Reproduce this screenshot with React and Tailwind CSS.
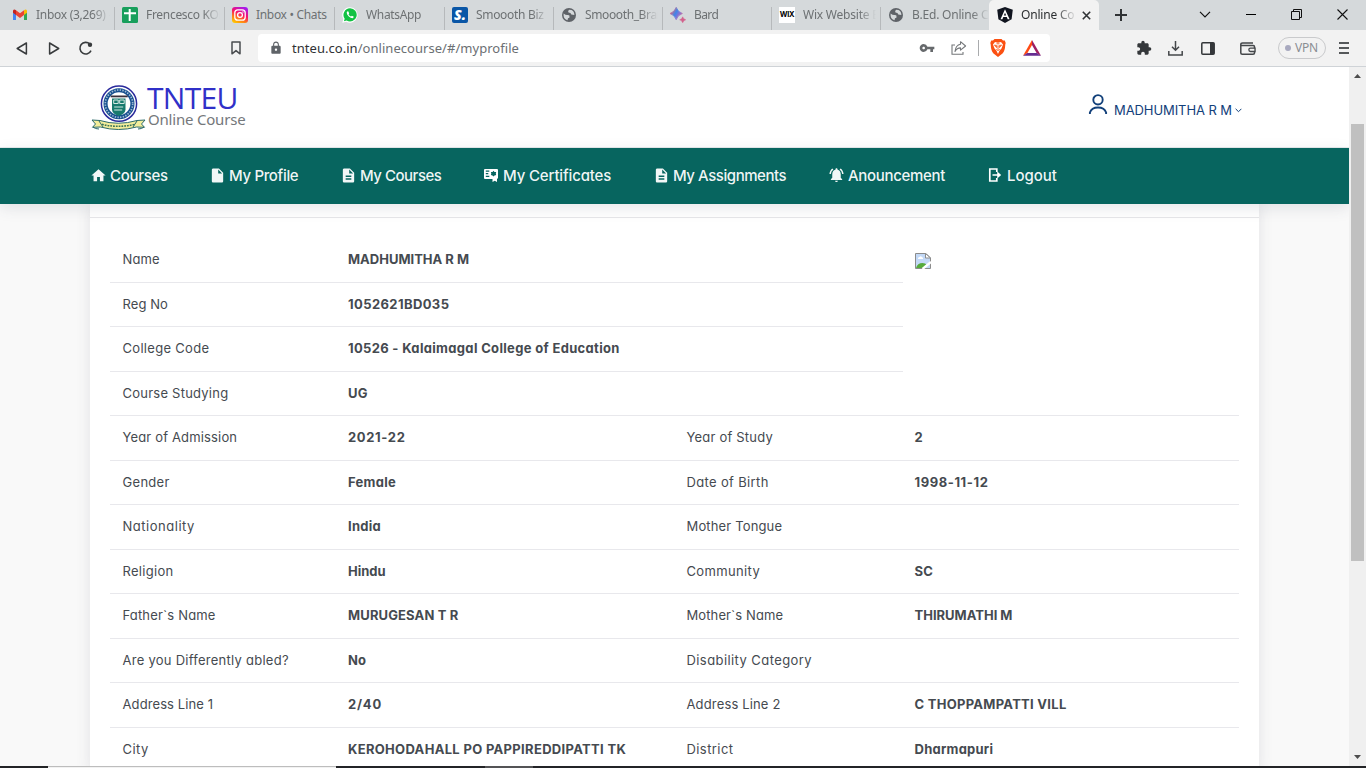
import React from "react";
import {
  MdHome,
  MdInsertDriveFile,
  MdDescription,
  MdNotificationsActive,
  MdLock,
  MdVpnKey,
  MdExtension,
} from "react-icons/md";

function GlobeIcon() {
  return (
    <svg width="16" height="16" viewBox="0 0 16 16">
      <circle cx="8" cy="8" r="7" fill="#5f6368" />
      <path d="M2.6 6.5 Q5 8.5 7 8 Q9 8 8.5 9.8 Q9 11 7 11.2 L6.5 13.2 Q2.8 12.2 2.6 8.500Z" fill="#d5d9db" />
      <path d="M8 2.700 Q6.500 4.500 7.500 5.500 Q10 5.500 10.300 7.500 L13.400 8 Q13.200 4 10.500 3Z" fill="#d5d9db" />
    </svg>
  );
}

function GmailIcon() {
  return (
    <svg width="16" height="16" viewBox="0 0 16 16">
      <path d="M1 4v9h3V7z" fill="#4285f4" />
      <path d="M12 7v6h3V4z" fill="#34a853" />
      <path d="M1 3.500 Q2 1.800 4 3.200 V8 L1 5.700z" fill="#c5221f" />
      <path d="M4 3.200 L8 6.300 12 3.200 V8 L8 11 4 8z" fill="#ea4335" />
      <path d="M12 3.200 Q14 1.800 15 3.500 V5.700 L12 8z" fill="#fbbc04" />
    </svg>
  );
}

function SheetIcon() {
  return (
    <svg width="16" height="16" viewBox="0 0 16 16">
      <rect width="16" height="16" rx="1.500" fill="#189f5c" />
      <path d="M2 5.200h12v2H2zM6.700 2h2v12h-2z" fill="#fff" />
    </svg>
  );
}

function InstagramIcon() {
  return (
    <svg width="16" height="16" viewBox="0 0 16 16">
      <defs>
        <linearGradient id="ig" x1="0.200" y1="1" x2="0.700" y2="0">
          <stop offset="0" stopColor="#ffc800" />
          <stop offset="0.300" stopColor="#ff7a1a" />
          <stop offset="0.600" stopColor="#f8106b" />
          <stop offset="1" stopColor="#a51bef" />
        </linearGradient>
      </defs>
      <rect width="16" height="16" rx="3" fill="url(#ig)" />
      <rect x="2.800" y="2.800" width="10.400" height="10.400" rx="3" fill="none" stroke="#fff" strokeWidth="1.300" />
      <circle cx="8" cy="8" r="2.400" fill="none" stroke="#fff" strokeWidth="1.300" />
      <circle cx="11" cy="5" r="0.700" fill="#fff" />
    </svg>
  );
}

function WhatsAppIcon() {
  return (
    <svg width="16" height="16" viewBox="0 0 16 16">
      <path d="M8 0.200a7.700 7.700 0 1 1-3.700 14.500L0.300 15.800 1.400 12A7.700 7.700 0 0 1 8 0.200z" fill="#fff" />
      <path d="M8 1.300a6.600 6.600 0 1 1-3.400 12.200L1.900 14.200 2.700 11.700A6.600 6.600 0 0 1 8 1.300z" fill="#12c243" />
      <path d="M5.600 4.300 4.700 5.300Q4.500 7.200 6.600 9.300 8.800 11.400 10.600 11.300L11.700 10.300 11.500 9.500 9.900 8.700 9 9.600Q7.400 9 6.500 7.200L7.200 6.400 6.400 4.400z" fill="#fff" />
    </svg>
  );
}

function SmooothIcon() {
  return (
    <div className="flex h-4 w-4 items-center justify-center rounded-[2px] bg-[#0a56a6] font-['Open_Sans',sans-serif] text-[14px] leading-none font-extrabold text-white italic">
      S.
    </div>
  );
}

function BardIcon() {
  return (
    <svg width="16" height="16" viewBox="0 0 16 16">
      <defs>
        <linearGradient id="bard" x1="0" y1="0.200" x2="1" y2="0.800">
          <stop offset="0.100" stopColor="#e2607c" />
          <stop offset="0.450" stopColor="#3f86e8" />
          <stop offset="0.650" stopColor="#7d74d8" />
          <stop offset="1" stopColor="#d9688f" />
        </linearGradient>
      </defs>
      <path d="M6.200 0.300Q7.600 4.900 12.400 6.500 7.600 8.100 6.200 12.700 4.800 8.100 0 6.500 4.800 4.900 6.200 0.300z" fill="url(#bard)" stroke="url(#bard)" strokeWidth="0.800" />
      <path d="M12.700 9.800Q13.400 12.100 15.800 12.800 13.400 13.500 12.700 15.800 12 13.500 9.600 12.800 12 12.100 12.700 9.800z" fill="#d4618c" stroke="#d4618c" strokeWidth="0.400" />
    </svg>
  );
}

function WixIcon() {
  return (
    <div className="flex h-4 w-4 items-center justify-center bg-white font-['Inter',sans-serif] text-[7.500px] leading-none font-bold tracking-[-0.300px] text-black">
      WIX
    </div>
  );
}

function AngularIcon() {
  return (
    <svg width="16" height="16" viewBox="0 0 16 16">
      <path d="M8 0 15.800 2.700 14.600 12.300 8 16 1.400 12.300 0.200 2.700z" fill="#10141f" />
      <path d="M8 2.200 3.500 12.200h1.900l.9-2.200h3.500l.9 2.200h1.900zM8 5.800l1.200 2.800H6.800z" fill="#fff" />
    </svg>
  );
}

const tabs = [
  { label: "Inbox (3,269) -", icon: <GmailIcon />, width: "w-[115px] pl-3", text: "tracking-[-0.280px]" },
  { label: "Frencesco KOL", icon: <SheetIcon />, width: "w-[110px] pl-[7px]", text: "tracking-[-0.300px]" },
  { label: "Inbox • Chats", icon: <InstagramIcon />, width: "w-[110px] pl-[7px]", text: "tracking-[-0.320px]", whole: true },
  { label: "WhatsApp", icon: <WhatsAppIcon />, width: "w-[110px] pl-[7px]", text: "tracking-[-0.350px]" },
  { label: "Smoooth Biz |", icon: <SmooothIcon />, width: "w-[109px] pl-[7px]", text: "tracking-[-0.320px]" },
  { label: "Smoooth_Bran", icon: <GlobeIcon />, width: "w-[109px] pl-[7px]", text: "tracking-[-0.380px]" },
  { label: "Bard", icon: <BardIcon />, width: "w-[109px] pl-[7px]", text: "tracking-[-0.600px]" },
  { label: "Wix Website E", icon: <WixIcon />, width: "w-[109px] pl-[7px]", text: "tracking-[-0.220px]" },
  { label: "B.Ed. Online C", icon: <GlobeIcon />, width: "w-[108px] pl-[7px]", text: "tracking-[-0.200px]", last: true },
];

function TabStrip() {
  return (
    <div className="flex h-[30px] bg-[#d5d9db] text-[12px] text-[#6d7173]">
      {tabs.map((tab) => (
        <div key={tab.label} className={`flex shrink-0 items-center gap-2 ${tab.width}`}>
          <div className="w-4 shrink-0">{tab.icon}</div>
          <div
            className={`min-w-0 flex-1 whitespace-nowrap ${tab.text} ${
              tab.whole ? "" : "mask-[linear-gradient(to_right,black_calc(100%-17px),transparent_100%)]"
            }`}
          >
            {tab.label}
          </div>
          {tab.last ? null : <div className="mt-[7px] -ml-1 h-[23px] w-px shrink-0 bg-[#b6b9bb]" />}
        </div>
      ))}
      <div className="flex w-[110px] shrink-0 items-center rounded-t-[5px] bg-[#f2f2f2] pl-2 text-[#2c2f31]">
        <AngularIcon />
        <div className="ml-2 w-[54px] mask-[linear-gradient(to_right,black_34px,transparent_56px)] tracking-[-0.200px] whitespace-nowrap">
          Online Co
        </div>
        <svg className="ml-[7px]" width="9" height="9" viewBox="0 0 9 9">
          <path d="M.8.8l7.400 7.400M8.200.8L.8 8.200" stroke="#303335" strokeWidth="1.600" />
        </svg>
      </div>
      <svg className="mt-[9px] ml-4" width="12" height="12" viewBox="0 0 12 12">
        <path d="M6 0v12M0 6h12" stroke="#303335" strokeWidth="2" />
      </svg>
      <div className="ml-[72px] flex items-center pb-[2px]">
        <svg width="12" height="7" viewBox="0 0 12 7">
          <path d="M1 .8l5 5 5-5" fill="none" stroke="#111" strokeWidth="1.200" />
        </svg>
        <div className="ml-[35px] h-px w-[10px] bg-black" />
        <svg className="ml-[35px]" width="11" height="11" viewBox="0 0 11 11">
          <path d="M.5 2.500h8v8h-8zM2.500 2.500v-2h8v8h-2" fill="none" stroke="#111" />
        </svg>
        <svg className="ml-[35px]" width="11" height="11" viewBox="0 0 11 11">
          <path d="M.5.5l10 10M10.500.5l-10 10" stroke="#111" strokeWidth="1.100" />
        </svg>
      </div>
    </div>
  );
}

function AddressBar() {
  return (
    <div className="flex h-[37px] items-center border-b border-[#cfd3d7] bg-[#f2f2f2]">
      <svg className="ml-4" width="12" height="13" viewBox="0 0 12 13">
        <path d="M10.400 1v11L1.200 6.500z" fill="none" stroke="#383b3d" strokeWidth="1.500" strokeLinejoin="round" />
      </svg>
      <svg className="ml-5" width="12" height="13" viewBox="0 0 12 13">
        <path d="M1.600 1v11L10.700 6.500z" fill="none" stroke="#383b3d" strokeWidth="1.500" strokeLinejoin="round" />
      </svg>
      <svg className="ml-[18px]" width="16" height="15" viewBox="0 0 16 15">
        <path d="M11.800 3A5.800 5.800 0 1 0 13 9.600" fill="none" stroke="#383b3d" strokeWidth="1.600" />
        <circle cx="12" cy="3.800" r="2.200" fill="#383b3d" />
      </svg>
      <svg className="ml-[137px]" width="10" height="14" viewBox="0 0 10 14">
        <path d="M1 1h8v11.800L5 9.600 1 12.800z" fill="none" stroke="#4a4d50" strokeWidth="1.500" strokeLinejoin="round" />
      </svg>
      <div className="ml-[17px] flex h-7 w-[792px] items-center rounded bg-white pl-[11px]">
        <MdLock className="h-[14px] w-[14px] text-[#5f6368]" />
        <div className="ml-[9px] w-[627px] pt-[2px] font-['Noto_Sans',sans-serif] text-[13px] tracking-[0.040px] whitespace-nowrap text-[#6b6f73]">
          <span className="text-[#2f3235]">tnteu.co.in</span>/onlinecourse/#/myprofile
        </div>
        <MdVpnKey className="h-4 w-4 text-[#66696c]" />
        <svg className="ml-4" width="16" height="16" viewBox="0 0 16 16">
          <path d="M4 5H1v9.300h11V12" fill="none" stroke="#74777a" strokeWidth="1.100" />
          <path d="M9.500 1.700 14.600 6 9.500 10.200V7.900Q6 7.900 4 11.500 4.600 5 9.500 4.200z" fill="none" stroke="#74777a" strokeWidth="1.100" strokeLinejoin="round" />
        </svg>
        <div className="ml-[11px] h-4 w-px bg-[#a9abad]" />
        <svg className="ml-[11px]" width="16" height="18" viewBox="0 0 16 18">
          <path d="M4.500 0h7L13 1.600l1.800-.1L15.700 4l-.4 1.500Q15 12 12.500 14.500L8 18 3.500 14.500Q1 12 .7 5.500L.3 4l.9-2.500 1.800.1z" fill="#fb5012" />
          <path d="M5 3l3 .7L11 3l2 2.600-1.500 4L9.600 11.500 8 15 6.400 11.500 4.500 9.600 3 5.600z" fill="#fff" />
          <path d="M4.500 6l2.300.7-.3 1.800zM11.500 6l-2.300.7.3 1.800zM8 6.500v4M6.300 10.300L8 11.500l1.700-1.200M6.500 4.800h3" fill="none" stroke="#fb5012" strokeWidth="0.900" />
        </svg>
        <svg className="ml-[17px]" width="18" height="16" viewBox="0 0 18 16">
          <path d="M9 0L0 15.800 4.300 13.200 9 5z" fill="#ff4a13" />
          <path d="M9 0l9 15.800-4.300-2.600L9 5z" fill="#9e1f63" />
          <path d="M0 15.800h18l-4.300-2.900H4.300z" fill="#662d91" />
        </svg>
      </div>
      <MdExtension className="ml-[86px] h-4 w-4 text-[#34373a]" />
      <svg className="ml-[16px]" width="15" height="15" viewBox="0 0 15 15">
        <path d="M7.500 0v9M4 5.800l3.500 3.500L11 5.800M.8 10v4h13.400v-4" fill="none" stroke="#44474a" strokeWidth="1.500" />
      </svg>
      <svg className="ml-[18px]" width="14" height="13" viewBox="0 0 14 13">
        <rect x="0.800" y="0.800" width="12.400" height="11.400" rx="1" fill="none" stroke="#34373a" strokeWidth="1.500" />
        <path d="M9 1h4v11H9z" fill="#34373a" />
      </svg>
      <svg className="ml-[25px]" width="16" height="13" viewBox="0 0 16 13">
        <path d="M13 1H2.500Q.8 1 .8 2.500V11q0 1.200 1.500 1.200H13q1.500 0 1.500-1.200V4.800q0-1.200-1.200-1.200H1" fill="none" stroke="#44474a" strokeWidth="1.500" />
        <path d="M15 6.200h-4.500a1.500 1.500 0 0 0 0 3.300H15z" fill="#f2f2f2" stroke="#44474a" strokeWidth="1.300" />
      </svg>
      <div className="ml-[22px] flex h-[22px] w-12 items-center gap-1 rounded-full border border-[#c9cacc] pl-1.5 text-[12px] tracking-[-0.200px] text-[#8a8d92]">
        <div className="h-1.5 w-1.5 rounded-full bg-[#a8a9bf]" />
        VPN
      </div>
      <div className="ml-[13px] flex flex-col gap-[3px]">
        <div className="h-[2px] w-[10px] bg-[#55585a]" />
        <div className="h-[2px] w-[10px] bg-[#55585a]" />
        <div className="h-[2px] w-[10px] bg-[#55585a]" />
      </div>
    </div>
  );
}

function Emblem() {
  return (
    <svg className="mt-px -ml-px" width="57" height="46" viewBox="0 0 57 46">
      <circle cx="30" cy="18.700" r="17.600" fill="#fff" stroke="#2a2a9c" strokeWidth="1.500" />
      <circle cx="30" cy="18.700" r="15.500" fill="#17508f" />
      <circle cx="30" cy="18.700" r="13.700" fill="none" stroke="#9db9d3" strokeWidth="1.700" strokeDasharray="1.400 1.300" />
      <circle cx="30" cy="18.700" r="11.400" fill="#fff" />
      <path d="M21.700 10.500h17v1.800h-17z" fill="#38303c" />
      <path d="M23 13.500h13.500v11q0 4-6.800 6.500-6.700-2.500-6.700-6.500z" fill="#187a6e" />
      <path d="M24.700 15h4.500v3.500h-4.500zM30.700 15h4.500v3.500h-4.500zM25.200 22h9M25.200 25h8" fill="none" stroke="#d3e8e2" strokeWidth="1" />
      <path d="M3 35l8 .5q18 5.500 37 0l8-.5-3.500 4 3 3.300-8-.3q-18 5-36 0l-8 .3 3-3.300z" fill="#f3ed9a" stroke="#2b6a69" strokeWidth="1" />
      <path d="M13 39.300q16 4 33 0" fill="none" stroke="#3b7459" strokeWidth="1.600" strokeDasharray="1.800 1" />
      <path d="M10 44q-4 0-6-2M49 44q4 0 6-2M10 36l4 6M48 36l-4 6" fill="none" stroke="#2b6a69" />
    </svg>
  );
}

function SiteHeader() {
  return (
    <header className="flex h-[81px] items-start justify-between border-b border-[#e6eaec] bg-white pr-[107px] pl-[90px]">
      <div className="flex pt-[17px]">
        <Emblem />
        <div className="pt-px pl-[1px]">
          <div className="h-[27px] font-['Open_Sans',sans-serif] text-[30px] leading-[25px] tracking-[-0.700px] text-[#3030c8]">
            TNTEU
          </div>
          <div className="pl-[1px] font-['Noto_Sans',sans-serif] text-[15px] leading-[15px] tracking-[-0.200px] text-[#75787b]">
            Online Course
          </div>
        </div>
      </div>
      <div className="flex pt-[27px] text-[#12407a]">
        <svg width="20" height="21" viewBox="0 0 20 21">
          <circle cx="10" cy="5.800" r="4.700" fill="none" stroke="#12407a" strokeWidth="1.900" />
          <path d="M1.900 20v-1.500Q3.500 13.500 10 13.500t8.100 5V20" fill="none" stroke="#12407a" strokeWidth="1.900" />
        </svg>
        <div className="mt-[6px] ml-1.5 font-['Inter',sans-serif] text-[13px] leading-5 tracking-[-0.080px]">MADHUMITHA R M</div>
        <svg className="mt-[14px] ml-[3px]" width="7" height="5" viewBox="0 0 7 5">
          <path d="M.6.800l2.900 2.900L6.400.800" fill="none" stroke="#12407a" />
        </svg>
      </div>
    </header>
  );
}

function CertificateIcon() {
  return (
    <svg width="14" height="14" viewBox="0 0 14 14">
      <path d="M1 1h12q1 0 1 1v8q0 .8-1 .8V14l-2.200-1.300L8.500 14v-3H1q-1 0-1-1V2q0-1 1-1z" fill="#fff" />
      <path d="M1.800 3.200h3.500M1.800 5.700h2.500M1.800 8.300h3.500" stroke="#07655f" strokeWidth="1.300" />
      <path d="M9.500 2.700l1 1.200 1.700.2-.4 1.500.4 1.500-1.700.3-1 1.200-1-1.200-1.600-.3.400-1.500-.4-1.500 1.600-.2z" fill="#07655f" />
    </svg>
  );
}

function LogoutIcon() {
  return (
    <svg width="14" height="14" viewBox="0 0 14 14">
      <path d="M8.800 4V1H1.800v12h7v-3M4.500 7h7" fill="none" stroke="#fff" strokeWidth="1.700" />
      <path d="M9.200 3.600L13.200 7l-4 3.400z" fill="#fff" />
    </svg>
  );
}

const navItems = [
  { label: "Courses", icon: <MdHome size={17} />, place: "w-[119px]", text: "tracking-[-0.300px]" },
  { label: "My Profile", icon: <MdInsertDriveFile size={17} />, place: "w-[131px]", text: "tracking-[-0.340px]" },
  { label: "My Courses", icon: <MdDescription size={17} />, place: "w-[143px]", text: "tracking-[-0.480px]" },
  { label: "My Certificates", icon: <CertificateIcon />, place: "w-[170px]", text: "tracking-[-0.150px]" },
  { label: "My Assignments", icon: <MdDescription size={17} />, place: "w-[175px]", text: "tracking-[-0.450px]" },
  { label: "Anouncement", icon: <MdNotificationsActive size={18} />, place: "w-[159px]", text: "tracking-[-0.320px]" },
  { label: "Logout", icon: <LogoutIcon />, place: "w-[100px]", text: "tracking-[-0.050px]" },
];

function NavBar() {
  return (
    <nav className="relative z-10 flex h-14 items-center bg-[#07655f] pl-[89.500px] font-['Inter',sans-serif] text-[15px] font-medium [font-feature-settings:'cv11'] text-white/95 shadow-[0_4px_14px_rgba(60,70,90,0.130)]">
      {navItems.map((item) => (
        <div key={item.label} className={`flex shrink-0 items-center gap-[3.500px] ${item.place}`}>
          <div className="flex w-[17px] shrink-0 justify-center pb-[2px]">{item.icon}</div>
          <div className={`whitespace-nowrap ${item.text}`}>{item.label}</div>
        </div>
      ))}
    </nav>
  );
}

function BrokenImage() {
  return (
    <svg width="16" height="16" viewBox="0 0 16 16">
      <path d="M.5.500h10.500l4.500 4.500v10.500H.5z" fill="#c3d9f7" stroke="#8c8c8c" />
      <path d="M10.500.500V5H15.500z" fill="#fff" stroke="#8c8c8c" />
      <path d="M3 5.500q0-1.500 1.500-1.500 1.500-1.500 2.500.300 1.500 0 1 1.700H3z" fill="#fff" />
      <path d="M1 15q1.500-5 6.500-5 3 0 4 1.500L8 15z" fill="#57ab3c" />
      <path d="M7.500 16l8.500-7" stroke="#fff" strokeWidth="2.300" />
    </svg>
  );
}

const tight = "tracking-[0px]";
const snug = "tracking-[0.150px]";
const normal = "tracking-[0.300px]";
const wide = "tracking-[0.420px]";
const wider = "tracking-[0.800px]";

const upperRows = [
  { label: ["Name", snug], value: ["MADHUMITHA R M", tight] },
  { label: ["Reg No", "tracking-[0.080px]"], value: ["1052621BD035", "tracking-[0.400px]"] },
  { label: ["College Code", normal], value: ["10526 - Kalaimagal College of Education", "tracking-[0.330px]"] },
  { label: ["Course Studying", "tracking-[0.230px]"], value: ["UG", snug] },
];

const lowerRows = [
  {
    cells: [
      ["Year of Admission", "tracking-[0.160px]"],
      ["2021-22", "tracking-[0.650px]"],
      ["Year of Study", "tracking-[0.200px]"],
      ["2", tight],
    ],
  },
  {
    cells: [
      ["Gender", normal],
      ["Female", "tracking-[0.270px]"],
      ["Date of Birth", "tracking-[0.350px]"],
      ["1998-11-12", "tracking-[0.580px]"],
    ],
  },
  {
    cells: [
      ["Nationality", "tracking-[0.520px]"],
      ["India", "tracking-[0.250px]"],
      ["Mother Tongue", snug],
      ["", tight],
    ],
  },
  {
    cells: [["Religion", normal], ["Hindu", tight], ["Community", "tracking-[0.350px]"], ["SC", snug]],
  },
  {
    cells: [
      ["Father`s Name", "tracking-[0.160px]"],
      ["MURUGESAN T R", "tracking-[0.130px]"],
      ["Mother`s Name", "tracking-[0.100px]"],
      ["THIRUMATHI M", tight],
    ],
  },
  {
    cells: [
      ["Are you Differently abled?", "tracking-[0.260px]"],
      ["No", tight],
      ["Disability Category", wide],
      ["", tight],
    ],
  },
  {
    cells: [
      ["Address Line 1", "tracking-[0.100px]"],
      ["2/40", wider],
      ["Address Line 2", snug],
      ["C THOPPAMPATTI VILL", "tracking-[0.280px]"],
    ],
  },
  {
    cells: [
      ["City", wide],
      ["KEROHODAHALL PO PAPPIREDDIPATTI TK", "tracking-[0.320px]"],
      ["District", wide],
      ["Dharmapuri", "tracking-[0.240px]"],
    ],
  },
];

function Label({ cell: [text, tracking] }) {
  return <div className={`whitespace-nowrap ${tracking}`}>{text}</div>;
}

function Value({ cell: [text, tracking] }) {
  return <div className={`font-bold whitespace-nowrap ${tracking}`}>{text}</div>;
}

function ProfileCard() {
  return (
    <section className="ml-[90px] w-[1169px] bg-white shadow-[0_0_14px_rgba(60,60,80,0.120)]">
      <div className="h-[14px] border-b border-[#e7e7e9]" />
      <div className="mt-[20.400px] ml-5 w-[1129px] font-['Inter',sans-serif] text-[13px] leading-5 [font-feature-settings:'cv11'] text-[#454a50]">
        <div className="flex border-b border-[#e8e8ec]">
          <div className="w-[793px]">
            {upperRows.map(({ label, value }, i) => (
              <div
                key={label[0]}
                className={`grid grid-cols-[225.500px_1fr] items-center pb-[2px] pl-[12.500px] ${
                  i < 3 ? "h-[44.500px] border-b border-[#e8e8ec]" : "h-[43.500px]"
                }`}
              >
                <Label cell={label} />
                <Value cell={value} />
              </div>
            ))}
          </div>
          <div className="pt-[15px] pl-3">
            <BrokenImage />
          </div>
        </div>
        {lowerRows.map(({ cells }) => (
          <div
            key={cells[0][0]}
            className="grid h-[44.500px] grid-cols-[225.500px_338.500px_228px_1fr] items-center border-b border-[#e8e8ec] pb-[2px] pl-[12.500px]"
          >
            <Label cell={cells[0]} />
            <Value cell={cells[1]} />
            <Label cell={cells[2]} />
            <Value cell={cells[3]} />
          </div>
        ))}
      </div>
    </section>
  );
}

function ScrollBar() {
  return (
    <div className="flex w-[17px] shrink-0 flex-col items-center bg-[#f0f0f0]">
      <svg className="mt-[7px]" width="7" height="4" viewBox="0 0 7 4">
        <path d="M0 4L3.500 0 7 4z" fill="#4d4d4d" />
      </svg>
      <div className="mt-[46px] h-[437px] w-[13px] bg-[#c0c0c0]" />
      <svg className="mt-auto mb-[7px]" width="7" height="4" viewBox="0 0 7 4">
        <path d="M0 0h7L3.500 4z" fill="#4d4d4d" />
      </svg>
    </div>
  );
}

function TaskbarEdge() {
  return (
    <div className="flex h-[2px] bg-[#232427]">
      <div className="ml-12 w-72 border-t border-[#bdbdbd] bg-[#f2f2f2]" />
      <div className="ml-[149px] w-12 bg-[#545456]" />
    </div>
  );
}

export default function App() {
  return (
    <div className="flex h-[768px] w-[1366px] flex-col overflow-hidden bg-white font-['Noto_Sans',sans-serif]">
      <TabStrip />
      <AddressBar />
      <div className="flex min-h-0 flex-1">
        <main className="min-w-0 flex-1 overflow-hidden bg-[#f9f9f9]">
          <SiteHeader />
          <NavBar />
          <ProfileCard />
        </main>
        <ScrollBar />
      </div>
      <TaskbarEdge />
    </div>
  );
}
